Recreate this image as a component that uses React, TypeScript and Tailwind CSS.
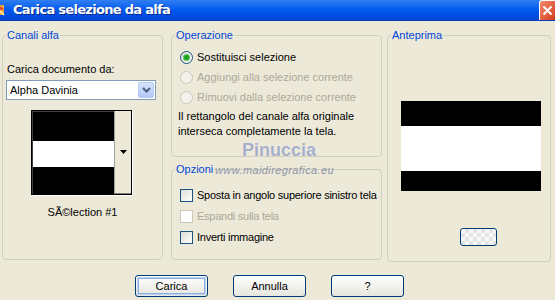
import React from 'react';

// finestra di dialogo "Carica selezione da alfa" in stile Windows XP

function Radio({ label, checked, disabled }: { label: string; checked?: boolean; disabled?: boolean }) {
  return (
    <div className="flex items-center h-[13px] whitespace-nowrap">
      <span
        className={
          'w-[13px] h-[13px] rounded-full border flex items-center justify-center ' +
          (disabled ? 'border-[#CAC8BB] bg-[#F2F1EA]' : 'border-[#1C5180] bg-gradient-to-br from-[#DCDCD7] to-white')
        }
      >
        {checked && <span className="w-[5px] h-[5px] rounded-full bg-[#21A121] shadow-[0_0_0_1px_#5BC95B]" />}
      </span>
      <span className={'ml-[4px] ' + (disabled ? 'text-[#ACA899]' : 'text-black')}>{label}</span>
    </div>
  );
}

function Check({ label, disabled }: { label: string; disabled?: boolean }) {
  return (
    <div className="flex items-center h-[13px] whitespace-nowrap">
      <span
        className={
          'shrink-0 w-[13px] h-[13px] border ' +
          (disabled ? 'border-[#CAC8BB] bg-white' : 'border-[#1C5180] bg-gradient-to-br from-[#DCDCD7] to-white')
        }
      />
      <span className={'ml-[4px] tracking-[-0.25px] ' + (disabled ? 'text-[#ACA899]' : 'text-black')}>{label}</span>
    </div>
  );
}

function Group({ title, className, children }: { title: string; className?: string; children?: React.ReactNode }) {
  return (
    <fieldset className={'border border-[#D0D0BF] rounded-[4px] ' + (className ?? '')}>
      <legend className="ml-[3px] px-[1px] leading-[13px] text-[#0046D5]">{title}</legend>
      {children}
    </fieldset>
  );
}

function XPButton({ label, focused }: { label: string; focused?: boolean }) {
  return (
    <button className="w-[73px] h-[22px] rounded-[3px] border border-[#003C74] bg-gradient-to-b from-white to-[#E6E5DD] p-[1px]">
      <span
        className={
          'flex items-center justify-center w-full h-full rounded-[2px] ' +
          (focused ? 'shadow-[inset_0_0_0_1px_#BCD4F6,inset_0_0_0_2px_#89ADE4]' : '')
        }
      >
        {label}
      </span>
    </button>
  );
}

export default function App() {
  return (
    <div className="relative w-[555px] h-[300px] overflow-hidden bg-[#ECE9D8] text-[11px] text-black font-['Liberation_Sans',Arial,sans-serif]">
      {/* barra del titolo */}
      <div className="relative h-[21px] flex items-center bg-gradient-to-b from-[#2F7EF2] via-[#0058EE] to-[#0047D4] border-b border-[#003DB8]">
        <svg width="14" height="14" viewBox="0 0 14 14" className="absolute left-[-8px] top-[3px]">
          <rect x="1" y="2" width="11" height="10" fill="#F4A640" />
          <path d="M3 10 L8 3 L12 6 Z" fill="#E34C2A" />
          <path d="M4 4 L12 12" stroke="#FFF3B0" strokeWidth="1.5" />
        </svg>
        <span className="ml-[13px] text-white font-bold text-[13px] [text-shadow:1px_1px_0_#0A2A8A] font-['DejaVu_Sans',sans-serif] tracking-[-0.7px]">
          Carica selezione da alfa
        </span>
        <div className="absolute right-0 top-0 w-[16px] h-[20px] bg-gradient-to-br from-[#F08A6A] to-[#D43A1A] border-l border-t border-white rounded-tl-[3px] flex items-center justify-center">
          <svg width="11" height="11" viewBox="0 0 11 11">
            <path d="M1.5 1.5 L9.5 9.5 M9.5 1.5 L1.5 9.5" stroke="white" strokeWidth="2" />
          </svg>
        </div>
      </div>

      {/* gruppi */}
      <div className="flex mt-[8px]">
        <Group title="Canali alfa" className="ml-[2px] w-[161px] h-[231px]">
          <div className="ml-[4px] mt-[21px] leading-[13px]">Carica documento da:</div>
          <div className="ml-[3px] mt-[4px] w-[150px] h-[20px] border border-[#7F9DB9] bg-white flex items-center">
            <span className="flex-1 pl-[3px]">Alpha Davinia</span>
            <span className="w-[16px] h-[16px] mr-[1px] rounded-[2px] bg-gradient-to-b from-[#D6E3FD] to-[#B2C8F6] border border-[#B7CBF5] flex items-center justify-center">
              <svg width="9" height="6" viewBox="0 0 9 6">
                <path d="M1 1 L4.5 4.5 L8 1" stroke="#4D6185" strokeWidth="2" fill="none" />
              </svg>
            </span>
          </div>
          <div className="ml-[28px] mt-[10px] w-[101px] h-[85px] border border-black shadow-[1px_1px_0_#FFFFFF] flex">
            <div className="w-[82px] flex flex-col border-l border-t border-[#404040]">
              <div className="h-[29px] bg-black" />
              <div className="h-[26px] bg-white" />
              <div className="flex-1 bg-black" />
            </div>
            <div className="flex-1 bg-[#ECE9D8] border-l border-[#A0A0A0] border-b border-b-[#808080] flex items-center justify-center">
              <svg width="7" height="4" viewBox="0 0 7 4">
                <path d="M0 0 L7 0 L3.5 4 Z" fill="black" />
              </svg>
            </div>
          </div>
          <div className="mt-[11px] text-center leading-[13px]">SÃ©lection #1</div>
        </Group>

        <div className="ml-[8px] w-[211px] flex flex-col">
          <Group title="Operazione" className="h-[128px]">
            <div className="ml-[8px] mt-[9px] flex flex-col gap-[7px]">
              <Radio label="Sostituisci selezione" checked />
              <Radio label="Aggiungi alla selezione corrente" disabled />
              <Radio label="Rimuovi dalla selezione corrente" disabled />
            </div>
            <div className="ml-[6px] mt-[5px] leading-[15px] whitespace-nowrap">
              Il rettangolo del canale alfa originale
              <br />
              interseca completamente la tela.
            </div>
          </Group>
          <Group title="Opzioni" className="mt-[6px] h-[97px]">
            <div className="ml-[8px] mt-[13px] flex flex-col gap-[8px]">
              <Check label="Sposta in angolo superiore sinistro tela" />
              <Check label="Espandi sulla tela" disabled />
              <Check label="Inverti immagine" />
            </div>
          </Group>
        </div>

        <Group title="Anteprima" className="ml-[5px] w-[164px] h-[233px]">
          <div className="ml-[13px] mt-[59px] w-[140px] h-[90px] flex flex-col">
            <div className="h-[25px] bg-black" />
            <div className="h-[45px] bg-white" />
            <div className="flex-1 bg-black" />
          </div>
          <div className="ml-[72px] mt-[37px] w-[37px] h-[18px] rounded-[3px] border border-[#003C74] bg-[linear-gradient(45deg,#E4E4E4_25%,transparent_25%,transparent_75%,#E4E4E4_75%),linear-gradient(45deg,#E4E4E4_25%,#F8F8F8_25%,#F8F8F8_75%,#E4E4E4_75%)] bg-[length:8px_8px] bg-[position:0_0,4px_4px]" />
        </Group>
      </div>

      {/* pulsanti */}
      <div className="flex mt-[13px] ml-[135px] gap-[25px]">
        <XPButton label="Carica" focused />
        <XPButton label="Annulla" />
        <XPButton label="?" />
      </div>

      {/* filigrana */}
      <div className="absolute left-[242px] top-[140px] text-[18px] leading-[20px] font-bold text-[#A6AEC8] [text-shadow:0_0_1px_#fff] pointer-events-none">
        Pinuccia
      </div>
      <div className="absolute left-[215px] top-[164px] text-[11px] leading-[13px] italic tracking-[0.4px] text-[#8E94A8] pointer-events-none">
        www.maidiregrafica.eu
      </div>
    </div>
  );
}
